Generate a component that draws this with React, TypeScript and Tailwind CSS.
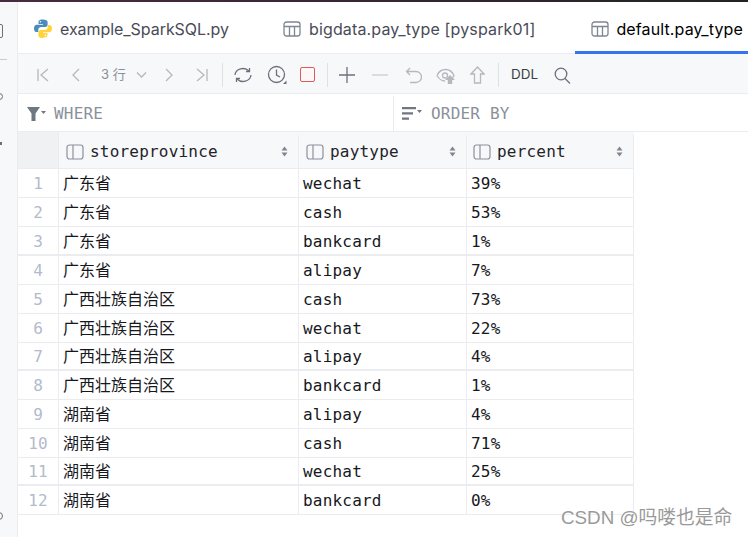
const rows = [
  ['广东省', 'wechat', '39%'],
  ['广东省', 'cash', '53%'],
  ['广东省', 'bankcard', '1%'],
  ['广东省', 'alipay', '7%'],
  ['广西壮族自治区', 'cash', '73%'],
  ['广西壮族自治区', 'wechat', '22%'],
  ['广西壮族自治区', 'alipay', '4%'],
  ['广西壮族自治区', 'bankcard', '1%'],
  ['湖南省', 'alipay', '4%'],
  ['湖南省', 'cash', '71%'],
  ['湖南省', 'wechat', '25%'],
  ['湖南省', 'bankcard', '0%'],
];

const mono = "font-['DejaVu_Sans_Mono',monospace]";

function TableIcon() {
  return (
    <svg width="18" height="16" viewBox="0 0 18 16" fill="none" stroke="#7f8592" strokeWidth="1.3">
      <rect x="1" y="1" width="16" height="14" rx="2.5" />
      <path d="M1 5.5h16M6.5 5.5V15M11.5 5.5V15" />
    </svg>
  );
}

function ColumnIcon() {
  return (
    <svg width="18" height="16" viewBox="0 0 18 16" fill="none" stroke="#8c919c" strokeWidth="1.2">
      <rect x="1" y="1" width="16" height="14" rx="2.5" fill="#f7f8fa" />
      <path d="M7 1v14" />
    </svg>
  );
}

function SortIcon() {
  return (
    <svg width="7" height="11" viewBox="0 0 7 11" fill="#80858f">
      <path d="M3.5 0.5 6.5 4.5H0.5ZM3.5 10.5 0.5 6.5H6.5Z" />
    </svg>
  );
}

function Ic({ children, w = 18, c = '#b4b8bf', ml }: { children: React.ReactNode; w?: number; c?: string; ml: string }) {
  return (
    <svg className={`shrink-0 ${ml}`} width={w} height="20" viewBox={`0 0 ${w} 20`} fill="none" stroke={c} strokeWidth="1.3">
      {children}
    </svg>
  );
}

function Header({ name, className }: { name: string; className: string }) {
  return (
    <div className={`flex items-center border-r border-[#ebecf0] pr-[10px] ${className}`}>
      <ColumnIcon />
      <span className={`ml-[6px] flex-1 text-[16px] tracking-[0.2px] text-[#1f2329] ${mono}`}>{name}</span>
      <SortIcon />
    </div>
  );
}

export default function App() {
  return (
    <div className="flex h-[537px] w-[748px] flex-col overflow-hidden bg-white font-['Inter',sans-serif]">
      <div className="h-[2px] shrink-0 bg-gradient-to-r from-[#4a2a3f] to-[#222226]" />
      <div className="flex min-h-0 flex-1">
        {/* left tool strip, only a sliver is visible */}
        <div className="relative w-[18px] shrink-0 border-r border-[#ebecf0] bg-[#f7f8fa]">
          <div className="absolute left-[-6px] top-[22px] h-[14px] w-[9px] rounded-[2px] border border-[#6c707e]" />
          <div className="absolute left-0 top-[57px] h-px w-[7px] bg-[#c9ccd6]" />
          <div className="absolute left-[-4px] top-[91px] h-[7px] w-[7px] rounded-full border border-[#6c707e]" />
          <div className="absolute left-0 top-[140px] h-[3px] w-[2px] bg-[#6c707e]" />
          <div className="absolute left-[-5px] top-[510px] h-[8px] w-[8px] rounded-full border border-[#6c707e]" />
        </div>

        <div className="flex min-w-0 flex-1 flex-col">
          {/* tabs */}
          <div className="flex h-[52px] shrink-0 items-center border-b border-[#ebecf0] text-[16px] text-[#494b57]">
            <div className="ml-[16px] flex items-center pt-[2px]">
              <svg width="18" height="19" viewBox="0 0 18 19">
                <path fill="#4b8bbe" d="M8.8 0.5c-4 0-4.3 1.5-4.3 2.6v1.9h4.5v.7H2.8C1.2 5.7 0 7 0 9.4c0 2.6 1.2 3.7 2.7 3.7h1.6v-2.2c0-1.6 1.300-2.900 3-2.900h4c1.300 0 2.300-1 2.300-2.300V3.100C13.600 1.400 12 .5 8.800 .5ZM6.400 2c.5 0 .8.400.8.800s-.3.800-.8.800-.8-.4-.8-.8.300-.8.800-.8Z" />
                <path fill="#ffd43b" d="M9.200 18.500c4 0 4.300-1.500 4.300-2.600v-1.900H9v-.7h6.200c1.600 0 2.800-1.300 2.800-3.700 0-2.600-1.200-3.700-2.700-3.700h-1.600v2.200c0 1.600-1.300 2.900-3 2.900h-4c-1.300 0-2.300 1-2.300 2.300v3.100c0 1.700 1.600 2.600 4.800 2.600Zm2.400-1.500c-.5 0-.8-.4-.8-.8s.3-.8.8-.8.8.4.8.8-.3.8-.8.800Z" />
              </svg>
              <span className="ml-[8px] tracking-[-0.05px]">example_SparkSQL.py</span>
            </div>
            <div className="ml-[54px] flex items-center pt-[2px]">
              <TableIcon />
              <span className="ml-[8px] tracking-[0.15px]">bigdata.pay_type [pyspark01]</span>
            </div>
            <div className="relative ml-[40px] flex h-full flex-1 items-center pl-[16px] pt-[2px] text-[#000000]">
              <TableIcon />
              <span className="ml-[7px] whitespace-nowrap tracking-[0.12px]">default.pay_type</span>
              <div className="absolute bottom-[-1px] left-0 right-0 h-[3px] bg-[#3574f0]" />
            </div>
          </div>

          {/* toolbar */}
          <div className="flex h-[40px] shrink-0 items-center border-b border-[#ebecf0] bg-[#f7f8fa] pt-[2px]">
            <Ic ml="ml-[19px]" w={12}><path d="M1 4v12M11 4 4 10l7 6" /></Ic>
            <Ic ml="ml-[22px]" w={9}><path d="M8 4 2 10l6 6" /></Ic>
            <span className="ml-[21px] w-[26px] shrink-0 whitespace-nowrap text-[13px] text-[#8c8f98] font-['Inter','Noto_Sans_CJK_SC',sans-serif]">3 行</span>
            <Ic ml="ml-[9px]" w={11}><path d="M1 7.500l4.500 4.500L10 7.500" /></Ic>
            <Ic ml="ml-[18px]" w={9}><path d="M1 4l6 6-6 6" /></Ic>
            <Ic ml="ml-[22px]" w={12}><path d="M1 4l7 6-7 6M11 4v12" /></Ic>
            <div className="ml-[14px] h-[24px] w-px shrink-0 bg-[#dfe1e5]" />
            <Ic ml="ml-[10px]" w={20} c="#6c707e"><path d="M2 10a8 7 0 0 1 14-4M18 10a8 7 0 0 1-14 4" /><path d="M13 6.500h3.500V3M7 13.500H3.500V17" /></Ic>
            <Ic ml="ml-[14px]" w={20} c="#6c707e">
              <circle cx="9.500" cy="9.500" r="8" />
              <path d="M9.500 4.500v5.500l3.500 2" />
              <path d="M19.500 15.500v3.500h-3.500z" fill="#6c707e" stroke="none" />
            </Ic>
            <div className="ml-[13px] h-[15px] w-[15px] shrink-0 rounded-[2px] border-[1.5px] border-[#db5c5c] bg-[#fff7f7]" />
            <div className="ml-[12px] h-[24px] w-px shrink-0 bg-[#dfe1e5]" />
            <Ic ml="ml-[11px]" w={16} c="#6c707e"><path d="M8 2v16M0 10h16" /></Ic>
            <Ic ml="ml-[17px]" w={16} c="#c9ccd6"><path d="M0 10h16" /></Ic>
            <Ic ml="ml-[17px]" w={17}><path d="M5 3 1.500 6.500 5 10M1.500 6.500H11a5 5 0 0 1 0 11H5" /></Ic>
            <Ic ml="ml-[14px]" w={20}>
              <path d="M1 10.500c2-4.500 5-6 8.500-6s6.500 1.500 8.500 6c-1 2.300-2.500 3.800-4 4.700M9 16c-3.500 0-6-2-8-5.500" />
              <circle cx="9" cy="10.500" r="2.500" />
              <path d="M14 10l5 5h-2.800v4h-4.400v-4H9z" fill="#b4b8bf" stroke="none" />
            </Ic>
            <Ic ml="ml-[14px]" w={15}><path d="M7.500 2 1 9h3.500v9h6V9H14z" /></Ic>
            <div className="ml-[13px] h-[24px] w-px shrink-0 bg-[#dfe1e5]" />
            <span className="ml-[12px] text-[13.500px] text-[#3d3f46]">DDL</span>
            <Ic ml="ml-[16px]" w={17} c="#6c707e"><circle cx="7" cy="9" r="5.800" /><path d="M11 13.500l5 5" /></Ic>
          </div>

          {/* filter */}
          <div className={`flex h-[38px] shrink-0 items-center border-b border-[#ebecf0] pt-[2px] text-[16px] tracking-[0.2px] text-[#8a9099] ${mono}`}>
            <div className="flex h-full w-[376px] items-center border-r border-[#ebecf0] pl-[9px]">
              <svg width="19" height="14" viewBox="0 0 19 14" fill="#6f7780">
                <path d="M0 0h13L8.500 6.500V14h-4V6.500ZM14 4h5l-2.500 3z" />
              </svg>
              <span className="ml-[8px]">WHERE</span>
            </div>
            <div className="flex items-center pl-[8px]">
              <svg width="20" height="13" viewBox="0 0 20 13" fill="#6f7780">
                <path d="M0 0h14v2.200H0ZM0 5.200h11v2.200H0ZM0 10.500h7v2.200H0ZM15 3h5l-2.500 3z" />
              </svg>
              <span className="ml-[9px]">ORDER BY</span>
            </div>
          </div>

          {/* grid */}
          <div className="w-[616px]">
            <div className="flex h-[37px] border-b border-[#ebecf0] bg-[#f7f8fa] pt-[3px]">
              <div className="mt-[-3px] w-[41px] shrink-0 border-r border-[#ebecf0] bg-[#f0f1f2]" />
              <Header name="storeprovince" className="w-[240px] shrink-0 pl-[7px]" />
              <Header name="paytype" className="w-[168px] shrink-0 pl-[7px]" />
              <Header name="percent" className="w-[167px] shrink-0 pl-[6px]" />
            </div>
            {rows.map((r, i) => (
              <div
                key={i}
                className={`flex border-[#ebecf0] text-[#16181d] ${i === 2 ? 'h-[29px] border-b-2' : i === 6 || i === 10 ? 'h-[28px] border-b-2' : 'h-[29px] border-b'}`}
              >
                <div className={`flex w-[41px] shrink-0 items-center justify-center border-r border-[#ebecf0] pt-[2px] text-[16px] text-[#b3bbcb] ${mono}`}>
                  {i + 1}
                </div>
                <div className="flex w-[240px] shrink-0 items-center border-r border-[#ebecf0] pb-[2px] pl-[4px] font-['Noto_Sans_CJK_SC',sans-serif] text-[16px]">
                  {r[0]}
                </div>
                <div className={`flex w-[168px] shrink-0 items-center border-r border-[#ebecf0] pl-[4px] pt-[2px] text-[16px] tracking-[0.2px] ${mono}`}>
                  {r[1]}
                </div>
                <div className={`flex w-[167px] shrink-0 items-center border-r border-[#ebecf0] pl-[4px] pt-[2px] text-[16px] tracking-[0.2px] ${mono}`}>
                  {r[2]}
                </div>
              </div>
            ))}
          </div>
        </div>
      </div>

      {/* watermark */}
      <div className="absolute left-[561px] top-[504px] whitespace-nowrap font-['Liberation_Sans','Noto_Sans_CJK_SC',sans-serif] text-[18.800px] text-[#9a9a9a] [text-shadow:0_0_2px_#ffffff]">
        CSDN @吗喽也是命
      </div>
    </div>
  );
}
